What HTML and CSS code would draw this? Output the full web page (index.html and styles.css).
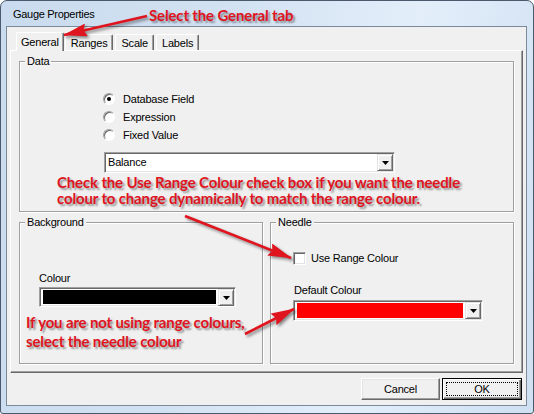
FILE: index.html
```html
<!DOCTYPE html>
<html lang="en">
<head>
  <meta charset="UTF-8">
  <title>Gauge Properties</title>
  <link rel="stylesheet" href="styles.css">
</head>
<body>
  <div class="window">
    <div class="titlebar">Gauge Properties</div>
    <div class="client">
      <div class="tabs">
        <div class="tab active">General</div>
        <div class="tab">Ranges</div>
        <div class="tab">Scale</div>
        <div class="tab">Labels</div>
      </div>

      <!-- General tab page -->
      <div class="panel">
        <div class="group data">
          <div class="group-label">Data</div>
          <div class="options">
            <div class="option"><span class="radio checked"></span>Database Field</div>
            <div class="option"><span class="radio"></span>Expression</div>
            <div class="option"><span class="radio"></span>Fixed Value</div>
          </div>
          <div class="combo balance">
            <div class="combo-value">Balance</div>
            <div class="drop"><svg width="7" height="4" viewBox="0 0 7 4"><polygon points="0,0 7,0 3.5,4" fill="#000"/></svg></div>
          </div>
        </div>

        <div class="lower">
          <div class="group background">
            <div class="group-label">Background</div>
            <div class="field-label">Colour</div>
            <div class="combo colour">
              <div class="combo-value"><span class="swatch black"></span></div>
              <div class="drop"><svg width="7" height="4" viewBox="0 0 7 4"><polygon points="0,0 7,0 3.5,4" fill="#000"/></svg></div>
            </div>
          </div>
          <div class="group needle">
            <div class="group-label">Needle</div>
            <div class="check-row"><span class="checkbox"></span>Use Range Colour</div>
            <div class="field-label">Default Colour</div>
            <div class="combo colour">
              <div class="combo-value"><span class="swatch red"></span></div>
              <div class="drop"><svg width="7" height="4" viewBox="0 0 7 4"><polygon points="0,0 7,0 3.5,4" fill="#000"/></svg></div>
            </div>
          </div>
        </div>
      </div>

      <div class="buttons">
        <button class="btn cancel">Cancel</button>
        <button class="btn ok"><span class="focus">OK</span></button>
      </div>
    </div>
  </div>

  <!-- red callouts drawn over the dialog -->
  <div class="annotations">
    <svg class="arrows" width="534" height="414" viewBox="0 0 534 414">
      <defs>
        <marker id="head" markerUnits="userSpaceOnUse" markerWidth="24" markerHeight="13" refX="23" refY="6.5" orient="auto">
          <polygon points="0,0 24,6.5 0,13 3,6.5" fill="#e0141e"/>
        </marker>
      </defs>
      <line x1="147" y1="16" x2="64" y2="35" stroke="#e0141e" stroke-width="2.6" marker-end="url(#head)"/>
      <line x1="185" y1="216" x2="291" y2="258" stroke="#e0141e" stroke-width="2.6" marker-end="url(#head)"/>
      <line x1="245" y1="334" x2="294" y2="309" stroke="#e0141e" stroke-width="2.6" marker-end="url(#head)"/>
    </svg>
    <div class="note note-tab">Select the General tab</div>
    <div class="note note-range">
      <div class="note-line">Check the Use Range Colour check box if you want the needle</div>
      <div class="note-line">colour to change dynamically to match the range colour.</div>
    </div>
    <div class="note note-needle">
      <div class="note-line">If you are not using range colours,</div>
      <div class="note-line">select the needle colour</div>
    </div>
  </div>
</body>
</html>
```

FILE: styles.css
```css
body {
  margin: 0;
  position: relative;
  width: 534px;
  height: 414px;
  font-family: "Liberation Sans", Arial, sans-serif;
  font-size: 11px;
  letter-spacing: -0.2px;
  color: #000;
}
.window {
  width: 534px;
  height: 414px;
  box-sizing: border-box;
  border: 1px solid #4a5a6c;
  border-radius: 7px 7px 3px 3px;
  background: linear-gradient(100deg, #c9dbee 0%, #d3e2f2 40%, #e3eefa 70%, #cfe0f2 100%);
  padding: 0 6px 7px 5px;
  display: flex;
  flex-direction: column;
}
.titlebar {
  height: 25px;
  line-height: 27px;
  padding-left: 7px;
  letter-spacing: -0.3px;
}
.client {
  flex: 1;
  border: 1px solid #7b8a9b;
  background: #f0f0f0;
  padding: 5px 3px 0 3px;
  display: flex;
  flex-direction: column;
}

/* tabs */
.tabs {
  display: flex;
  align-items: flex-end;
  height: 18px;
  padding-left: 8px;
}
.tab {
  position: relative;
  height: 16px;
  box-sizing: border-box;
  padding: 0 5px;
  line-height: 16px;
  margin-right: 2px;
  border: 1px solid;
  border-bottom: none;
  border-color: #fff #696969 #696969 #fff;
  border-radius: 2px 2px 0 0;
  box-shadow: inset -1px 0 0 #a0a0a0;
}
.tab.active {
  height: 19px;
  margin: 0 1px -1px -2px;
  padding: 0 4px;
  line-height: 18px;
  background: #f0f0f0;
  z-index: 1;
}

/* tab page */
.panel {
  height: 323px;
  box-sizing: border-box;
  border: 1px solid;
  border-color: #fff #696969 #696969 #fff;
  box-shadow: inset -1px -1px 0 #a0a0a0;
  padding: 10px 8px 0 8px;
}
.group {
  box-sizing: border-box;
  border: 1px solid #a0a0a0;
  box-shadow: 1px 1px 0 #fff, inset 1px 1px 0 #fff;
}
.group-label {
  width: fit-content;
  margin: -7px 0 0 5px;
  padding: 0 2px;
  line-height: 13px;
  background: #f0f0f0;
}
.data {
  height: 151px;
}
.options {
  margin-top: 22px;
  padding-left: 83px;
}
.option {
  display: flex;
  align-items: center;
  height: 18px;
}
.radio {
  width: 12px;
  height: 12px;
  box-sizing: border-box;
  margin-right: 8px;
  border-radius: 50%;
  border: 1px solid;
  border-color: #a0a0a0 #fff #fff #a0a0a0;
  box-shadow: inset 1px 1px 0 #696969;
  background: #fff;
  display: flex;
  align-items: center;
  justify-content: center;
}
.radio.checked::after {
  content: "";
  width: 4px;
  height: 4px;
  border-radius: 50%;
  background: #000;
}

.combo {
  display: flex;
  height: 21px;
  box-sizing: border-box;
  border: 1px solid;
  border-color: #a0a0a0 #fff #fff #a0a0a0;
  box-shadow: inset 1px 1px 0 #696969, inset -1px -1px 0 #e3e3e3;
  padding: 1px;
  background: #fff;
}
.combo-value {
  flex: 1;
  display: flex;
  padding-left: 2px;
  line-height: 17px;
}
.drop {
  width: 16px;
  height: 17px;
  box-sizing: border-box;
  border: 1px solid;
  border-color: #e3e3e3 #696969 #696969 #e3e3e3;
  box-shadow: inset 1px 1px 0 #fff, inset -1px -1px 0 #a0a0a0;
  background: #f0f0f0;
  display: flex;
  align-items: center;
  justify-content: center;
}
.balance {
  width: 291px;
  margin: 8px 0 0 84px;
}
.swatch {
  flex: 1;
  margin: 1px 2px 1px 0;
}
.swatch.black { background: #000; }
.swatch.red { background: #ff0000; }

.lower {
  display: grid;
  grid-template-columns: 1fr 1fr;
  gap: 7px;
  margin-top: 10px;
}
.lower .group {
  height: 142px;
}
.field-label {
  line-height: 13px;
}
.background .field-label {
  margin: 43px 0 0 19px;
}
.background .colour {
  width: 197px;
  height: 20px;
  margin: 2px 0 0 19px;
}
.check-row {
  display: flex;
  align-items: center;
  margin: 23px 0 0 22px;
  line-height: 13px;
}
.checkbox {
  width: 13px;
  height: 13px;
  box-sizing: border-box;
  margin-right: 5px;
  border: 1px solid;
  border-color: #a0a0a0 #fff #fff #a0a0a0;
  box-shadow: inset 1px 1px 0 #696969, inset -1px -1px 0 #e3e3e3;
  background: #fff;
}
.needle .field-label {
  margin: 19px 0 0 23px;
}
.needle .colour {
  width: 190px;
  margin: 3px 0 0 22px;
}

/* dialog buttons */
.buttons {
  display: flex;
  justify-content: flex-end;
  gap: 2px;
  margin-top: 5px;
  padding-right: 1px;
}
.btn {
  height: 22px;
  box-sizing: border-box;
  font: inherit;
  letter-spacing: inherit;
  color: #000;
  background: #f0f0f0;
  border: 1px solid;
  border-color: #fff #696969 #696969 #fff;
  box-shadow: inset -1px -1px 0 #a0a0a0, inset 1px 1px 0 #e3e3e3;
  padding: 0;
}
.cancel {
  width: 79px;
}
.ok {
  width: 80px;
  border-color: #000;
  box-shadow: inset 1px 1px 0 #fff, inset -1px -1px 0 #696969, inset -2px -2px 0 #a0a0a0;
  padding: 3px;
  display: flex;
}
.focus {
  flex: 1;
  border: 1px dotted #000;
  line-height: 12px;
}

/* callouts */
.annotations {
  position: absolute;
  inset: 0;
  pointer-events: none;
}
.arrows {
  position: absolute;
  left: 0;
  top: 0;
  filter: drop-shadow(2px 2px 1.5px rgba(0, 0, 0, 0.45));
}
.note {
  position: absolute;
  font-family: Lato, "Liberation Sans", sans-serif;
  font-weight: 700;
  font-size: 15px;
  line-height: 16px;
  letter-spacing: -0.15px;
  color: #e0141e;
  text-shadow: 2px 2px 2px rgba(0, 0, 0, 0.4);
  white-space: nowrap;
}
.note-line {
  height: 16px;
}
.note-tab {
  left: 149px;
  top: 7px;
}
.note-range {
  left: 57px;
  top: 174px;
}
.note-needle {
  left: 26px;
  top: 313px;
  line-height: 19px;
}
.note-needle .note-line {
  height: 19px;
}
```
